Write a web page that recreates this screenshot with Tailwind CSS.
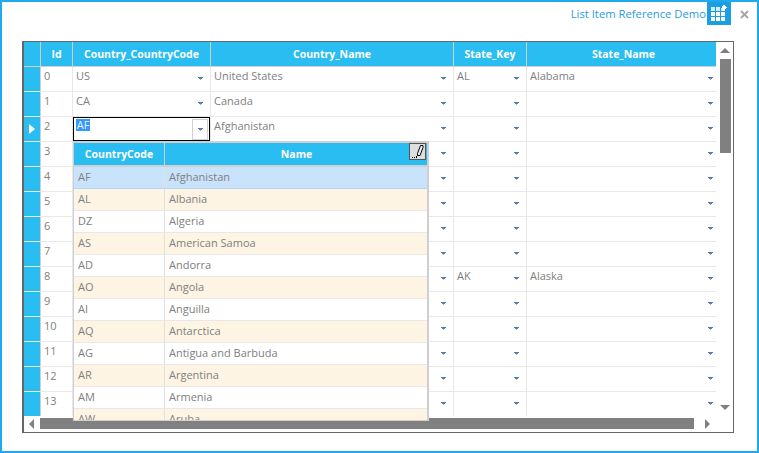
<!DOCTYPE html>
<html>

<head>
    <meta charset="UTF-8">
    <title>List Item Reference Demo</title>
    <script src="https://cdn.jsdelivr.net/npm/@tailwindcss/browser@4"></script>
</head>

<body class="bg-white">
    <div class="w-[759px] h-[453px] border-2 border-[#1fa9ee] bg-white flex flex-col font-['Open_Sans',sans-serif] overflow-hidden">

        <!-- title bar -->
        <div class="h-[39px] shrink-0 flex items-start justify-end">
            <span class="text-[11.25px] leading-[24px] text-[#2a9be0] mr-[1px]">List Item Reference Demo</span>
            <div class="w-[24px] h-[23px] bg-[#1c9ee3] -mt-[2px] box-content pt-[2px]">
                <svg width="24" height="23" viewBox="0 0 24 23" shape-rendering="crispEdges" class="block">
                    <g fill="#ffffff">
                        <rect x="4" y="5" width="4" height="4" fill="#d6eefb" /><rect x="9" y="5" width="4" height="4" fill="#d6eefb" /><rect x="14" y="6" width="4" height="3" fill="#d6eefb" />
                        <rect x="4" y="10" width="4" height="4" /><rect x="9" y="10" width="4" height="4" /><rect x="14" y="10" width="4" height="4" />
                        <rect x="4" y="15" width="4" height="4" /><rect x="9" y="15" width="4" height="4" /><rect x="14" y="15" width="4" height="4" />
                        <path d="M15 4h1v-1h2v1h1v1h1v1h-1v1h-1v1h-2v-1h-1z" />
                    </g>
                </svg>
            </div>
            <div class="w-[26px] h-[24px] flex items-center justify-center">
                <svg width="9" height="9" viewBox="0 0 9 9" class="block">
                    <path d="M1 1l7 7M8 1l-7 7" stroke="#a8a8a8" stroke-width="2" />
                </svg>
            </div>
        </div>

        <!-- grid -->
        <div class="ml-[20px] w-[712px] h-[392px] border border-l-2 border-[#666666] flex">
            <div class="relative w-[692px] flex flex-col">
                <div class="h-[374px] overflow-hidden">
                    <div id="gridHead" class="grid grid-cols-[17px_32px_138px_243px_73px_194px] w-[697px] h-[25px] bg-[#29bdf2] border-b border-[#cfcfcf] text-white font-bold text-[10.5px] leading-[24px] text-center"></div>
                    <div id="gridBody"></div>
                </div>

                <!-- horizontal scrollbar -->
                <div class="h-[16px] flex items-start pt-[2px]">
                    <svg width="5" height="10" viewBox="0 0 5 10" class="block ml-[5px] mt-[1px]"><path d="M5 0v10L0 5z" fill="#808080" /></svg>
                    <div class="ml-[6px] w-[654px] h-[11px] bg-[#808080]"></div>
                    <svg width="5" height="10" viewBox="0 0 5 10" class="block ml-[11px] mt-[1px]"><path d="M0 0v10L5 5z" fill="#808080" /></svg>
                </div>

                <!-- dropdown list -->
                <div class="absolute left-[49px] top-[99px] w-[356px] h-[280px] bg-white border-t-2 border-l border-r-2 border-b border-[#cfcfcf] overflow-hidden">
                    <div class="relative grid grid-cols-[91px_263px] h-[24px] bg-[#29bdf2] border-b-2 border-[#cfcfcf] text-white font-bold text-[10.5px] leading-[22px] text-center">
                        <div class="border-r border-[#cfcfcf]">CountryCode</div>
                        <div>Name</div>
                        <div class="absolute left-[335px] top-0 w-[17px] h-[17px] bg-[#dedede] border border-[#555555]">
                            <svg width="15" height="15" viewBox="0 0 15 15" class="block">
                                <path d="M10.5 1.5h2.5v2l-3 8h-2.5v-2z" fill="#eeeeee" stroke="#000000" stroke-width="1" />
                                <rect x="2" y="13" width="1" height="1" fill="#000000" /><rect x="4" y="13" width="1" height="1" fill="#000000" /><rect x="6" y="12" width="1" height="2" fill="#000000" />
                            </svg>
                        </div>
                    </div>
                    <div id="listBody"></div>
                </div>
            </div>

            <!-- vertical scrollbar -->
            <div class="w-[17px] flex flex-col items-center pt-[6px] pl-[1px]">
                <svg width="10" height="5" viewBox="0 0 10 5" class="block"><path d="M0 5h10L5 0z" fill="#808080" /></svg>
                <div class="mt-[6px] w-[11px] h-[94px] bg-[#808080]"></div>
                <svg width="10" height="5" viewBox="0 0 10 5" class="block mt-auto mb-[22px]"><path d="M0 0h10L5 5z" fill="#808080" /></svg>
            </div>
        </div>
    </div>

    <script>
        const arrow = `<svg width="5" height="3" viewBox="0 0 5 3" shape-rendering="crispEdges" class="block shrink-0 mt-[10px]"><rect width="5" height="1" fill="#4f7ab5" /><rect x="1" y="1" width="3" height="1" fill="#5b83b8" /><rect x="2" y="2" width="1" height="1" fill="#b9b36a" /></svg>`;
        const headClass = "border-r border-[#cfcfcf]";

        document.getElementById("gridHead").innerHTML =
            ["", "Id", "Country_CountryCode", "Country_Name", "State_Key", "State_Name"]
                .map(h => `<div class="${headClass}">${h}</div>`).join("");

        const rows = [
            ["US", "United States", "AL", "Alabama"],
            ["CA", "Canada", "", ""],
            ["AF", "Afghanistan", "", ""],
            ["", "", "", ""], ["", "", "", ""], ["", "", "", ""], ["", "", "", ""], ["", "", "", ""],
            ["", "", "AK", "Alaska"],
            ["", "", "", ""], ["", "", "", ""], ["", "", "", ""], ["", "", "", ""], ["", "", "", ""]
        ];

        const cell = text => `<div class="flex justify-between pl-[3px] pr-[7px] border-r border-[#e8e8e8]"><span>${text}</span>${arrow}</div>`;

        document.getElementById("gridBody").innerHTML = rows.map((r, i) => `
            <div class="relative grid grid-cols-[17px_32px_138px_243px_73px_194px] w-[697px] h-[25px] text-[11px] leading-[18px] text-[#808080] border-b border-[#e8e8e8]">
                <div class="bg-[#29bdf2] border-r border-[#cfcfcf] flex items-center pl-[5px]">
                    ${i === 2 ? '<svg width="6" height="10" viewBox="0 0 6 10" class="block"><path d="M0 0v10l6-5z" fill="#ffffff" /></svg>' : ''}
                </div>
                <div class="pl-[3px] border-r border-[#e8e8e8]">${i}</div>
                ${cell(r[0])}${cell(r[1])}${cell(r[2])}${cell(r[3])}
                ${i === 2 ? `<div class="absolute left-[49px] top-0 w-[137px] h-[24px] bg-white border border-black pl-[2px]">
                    <span class="inline-block w-[14px] text-center bg-[#3399ff] text-[#e8f2ff] h-[12px] leading-[12px] mt-[1px] align-top">AF</span>
                    <div class="absolute right-[1px] top-[1px] w-[16px] h-[21px] border border-[#d0d0d0] flex justify-center"><div class="-mt-[2px]">${arrow}</div></div>
                </div>` : ''}
            </div>`).join("");

        const countries = [
            ["AF", "Afghanistan"], ["AL", "Albania"], ["DZ", "Algeria"], ["AS", "American Samoa"],
            ["AD", "Andorra"], ["AO", "Angola"], ["AI", "Anguilla"], ["AQ", "Antarctica"],
            ["AG", "Antigua and Barbuda"], ["AR", "Argentina"], ["AM", "Armenia"], ["AW", "Aruba"]
        ];

        document.getElementById("listBody").innerHTML = countries.map((c, i) => {
            const bg = i === 0 ? "bg-[#c9e3fc] border-[#b4d5f6]" : i % 2 ? "bg-[#fdf4e3] border-[#e8e8e8]" : "bg-white border-[#e8e8e8]";
            return `<div class="grid grid-cols-[91px_263px] h-[22px] border-b text-[11px] leading-[20px] text-[#808080] ${bg}">
                <div class="pl-[4px] border-r border-[#e0e0e0]">${c[0]}</div>
                <div class="pl-[4px]">${c[1]}</div>
            </div>`;
        }).join("");
    </script>
</body>

</html>
